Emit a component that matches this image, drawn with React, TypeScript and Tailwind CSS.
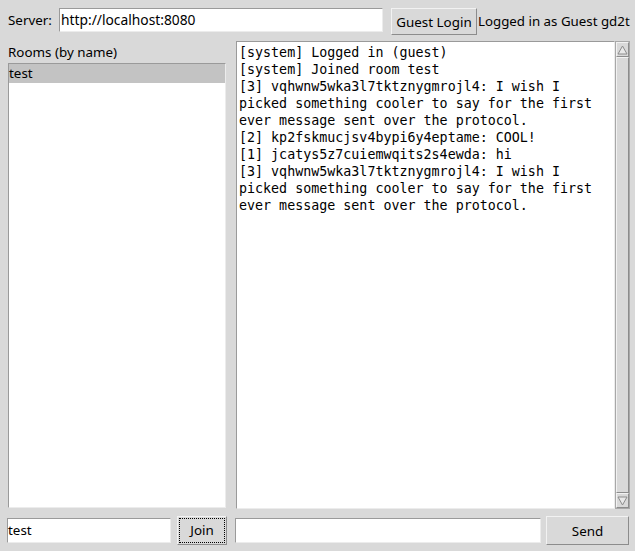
import React from 'react';

const ui = { fontFamily: '"Noto Sans", "Open Sans", sans-serif' };
const mono = { fontFamily: '"DejaVu Sans Mono", monospace' };

const lines = [
  '[system] Logged in (guest)',
  '[system] Joined room test',
  '[3] vqhwnw5wka3l7tktznygmrojl4: I wish I',
  'picked something cooler to say for the first',
  'ever message sent over the protocol.',
  '[2] kp2fskmucjsv4bypi6y4eptame: COOL!',
  '[1] jcatys5z7cuiemwqits2s4ewda: hi',
  '[3] vqhwnw5wka3l7tktznygmrojl4: I wish I',
  'picked something cooler to say for the first',
  'ever message sent over the protocol.',
];

const sunken = 'border border-t-[#9a9a9a] border-l-[#9a9a9a] border-b-[#ececec] border-r-[#ececec]';
const raised = 'border border-t-[#f2f2f2] border-l-[#f2f2f2] border-b-[#8c8c8c] border-r-[#8c8c8c]';

export default function App() {
  return (
    <div className="w-[635px] h-[551px] bg-[#d9d9d9] text-[13.4px] text-black flex flex-col overflow-hidden" style={ui}>
      {/* top bar */}
      <div className="h-[41px] flex items-start pt-[8px] pl-[8px]">
        <span className="w-[51px] shrink-0 h-[24px] leading-[24px]">Server:</span>
        <div className={`w-[324px] h-[24px] bg-white ${sunken} leading-[21px] pl-[1px] text-[13.8px]`}>http://localhost:8080</div>
        <button className={`ml-[8px] w-[86px] h-[27px] bg-[#d9d9d9] ${raised} leading-[24px] text-center`}>Guest Login</button>
        <span className="h-[27px] leading-[27px] pl-[1px] whitespace-nowrap text-[13.3px]">Logged in as Guest gd2t</span>
      </div>

      {/* main */}
      <div className="flex-1 flex min-h-0">
        <div className="w-[218px] ml-[8px] flex flex-col">
          <div className="h-[22px] leading-[22px]">Rooms (by name)</div>
          <div className={`h-[445px] bg-white ${sunken}`}>
            <div className="h-[19px] leading-[19px] bg-[#c3c3c3]">test</div>
          </div>
        </div>
        <div className="ml-[10px] flex h-[468px]">
          <div className={`w-[379px] bg-white ${sunken} px-[2px] pt-[2px] text-[13.33px] leading-[17px]`} style={mono}>
            {lines.map((l, i) => (
              <div key={i} className="whitespace-pre">{l}</div>
            ))}
          </div>
          <div className="w-[15px] bg-[#d9d9d9] border border-[#a8a8a8] flex flex-col">
            <div className={`h-[15px] ${raised} flex items-center justify-center`}>
              <svg width="11" height="10" viewBox="0 0 11 10"><polygon points="5.5,1 10,9 1,9" fill="#e8e8e8" stroke="#8c8c8c" strokeWidth="1" /></svg>
            </div>
            <div className={`flex-1 ${raised}`} />
            <div className={`h-[15px] ${raised} flex items-center justify-center`}>
              <svg width="11" height="10" viewBox="0 0 11 10"><polygon points="1,1 10,1 5.5,9" fill="#e8e8e8" stroke="#8c8c8c" strokeWidth="1" /></svg>
            </div>
          </div>
        </div>
      </div>

      {/* bottom bar */}
      <div className="h-[42px] flex items-start pt-[7px]">
        <div className={`ml-[7px] mt-[2px] w-[164px] h-[25px] bg-white ${sunken} leading-[22px]`}>test</div>
        <button className={`ml-[6px] w-[50px] h-[29px] bg-[#d9d9d9] ${raised} p-[1px]`}>
          <div className="w-full h-full border border-dotted border-black leading-[23px] text-center">Join</div>
        </button>
        <div className={`ml-[8px] mt-[2px] w-[306px] h-[25px] bg-white ${sunken}`} />
        <button className={`ml-[5px] w-[83px] h-[29px] bg-[#d9d9d9] ${raised} leading-[26px] text-center`}>Send</button>
      </div>
    </div>
  );
}
